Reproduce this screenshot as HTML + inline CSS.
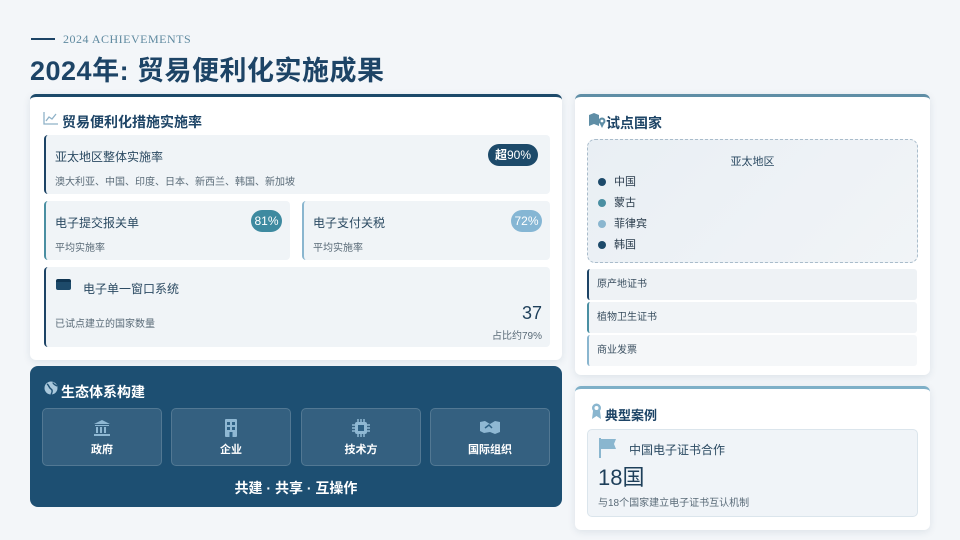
<!DOCTYPE html>
<html><head><meta charset="utf-8"><style>
*{margin:0;padding:0;box-sizing:border-box}
body{width:960px;height:540px;background:#f3f6f9;font-family:"Liberation Sans","Noto Sans CJK SC",sans-serif;position:relative;overflow:hidden;color:#1e3f5a}
.abs{position:absolute}
.card{position:absolute;background:#fff;border-radius:6px;box-shadow:0 2px 8px rgba(30,60,90,.10)}
.h{font-weight:700;font-size:14px;color:#1d4466}
.box{position:absolute;background:#f0f4f7;border-radius:4px}
.t13{font-size:12px;color:#2b4a62}
.t10{font-size:10px;color:#5a6b78}
.pill{position:absolute;border-radius:11px;color:#fff;font-size:12px;height:22px;line-height:22px;text-align:center}
.tile{position:absolute;top:42px;width:120px;height:58px;border:1px solid rgba(255,255,255,.15);background:rgba(255,255,255,.1);border-radius:5px;text-align:center;color:#fff;font-size:11px;font-weight:700}
.tile svg{display:block;margin:10px auto 4px}
.li{position:absolute;left:12px;width:330px;height:31px;border-radius:3px;font-size:10px;color:#3a4f60;line-height:31px;padding-left:8px}
.dot{display:inline-block;width:8px;height:8px;border-radius:50%;margin-right:8px;vertical-align:middle}
</style></head><body>
<div class="abs" style="left:31px;top:38px;width:24px;height:2px;background:#1d4466"></div>
<div class="abs" style="left:63px;top:32px;font-family:'Liberation Serif',serif;font-size:12px;color:#5f8aa0;letter-spacing:.5px">2024 ACHIEVEMENTS</div>
<div class="abs" style="left:30px;top:49px;font-size:27px;font-weight:700;color:#1d4466;letter-spacing:.5px">2024年: 贸易便利化实施成果</div>

<div class="card" style="left:30px;top:94px;width:532px;height:266px;border-top:3px solid #1d4a6a">
 <svg class="abs" style="left:13px;top:15px" width="15" height="13" viewBox="0 0 15 13"><path d="M1 0V12H15" stroke="#8fb2c8" fill="none" stroke-width="1.3"/><path d="M3 9L6 5L9 7L13 2" stroke="#8fb2c8" fill="none" stroke-width="1.3"/></svg>
 <div class="abs h" style="left:32px;top:15px;font-size:14px">贸易便利化措施实施率</div>
 <div class="box" style="left:14px;top:38px;width:506px;height:59px;border-left:2px solid #1d4466">
  <div class="abs t13" style="left:9px;top:13px">亚太地区整体实施率</div>
  <div class="abs t10" style="left:9px;top:38px">澳大利亚、中国、印度、日本、新西兰、韩国、新加坡</div>
  <div class="pill" style="right:12px;top:9px;width:50px;background:#1d4a6a"><b>超</b>90%</div>
 </div>
 <div class="box" style="left:14px;top:104px;width:246px;height:59px;border-left:2px solid #4a8fa2">
  <div class="abs t13" style="left:9px;top:13px">电子提交报关单</div>
  <div class="abs t10" style="left:9px;top:38px">平均实施率</div>
  <div class="pill" style="right:8px;top:9px;width:31px;background:#3e8aa0">81%</div>
 </div>
 <div class="box" style="left:272px;top:104px;width:248px;height:59px;border-left:2px solid #8ab6cf">
  <div class="abs t13" style="left:9px;top:13px">电子支付关税</div>
  <div class="abs t10" style="left:9px;top:38px">平均实施率</div>
  <div class="pill" style="right:8px;top:9px;width:31px;background:#85b6d4">72%</div>
 </div>
 <div class="box" style="left:14px;top:170px;width:506px;height:80px;border-left:2px solid #1d4466">
  <div class="abs" style="left:10px;top:12px;width:15px;height:11px;background:#1d4a6a;border-radius:2px;border-top:3px solid #0f3552"></div>
  <div class="abs t13" style="left:37px;top:13px">电子单一窗口系统</div>
  <div class="abs t10" style="left:9px;top:48px">已试点建立的国家数量</div>
  <div class="abs" style="right:8px;top:36px;font-size:18px;color:#1e3f5a">37</div>
  <div class="abs t10" style="right:8px;top:60px">占比约79%</div>
 </div>
</div>

<div class="abs" style="left:30px;top:366px;width:532px;height:141px;background:#1d4f72;border-radius:8px">
 <svg class="abs" style="left:14px;top:15px" width="14" height="14" viewBox="0 0 14 14"><circle cx="7" cy="7" r="6.5" fill="#a9c8dc"/><path d="M3 3C5 4 5 7 7 8C9 9 8 12 7 13.5M9 1.5C9 3 11 4 13 5" stroke="#1d4f72" fill="none" stroke-width="1.4"/></svg>
 <div class="abs" style="left:31px;top:16px;font-size:14px;font-weight:700;color:#fff">生态体系构建</div>
 <div class="tile" style="left:12px"><svg width="18" height="18" viewBox="0 0 18 18"><path d="M9 1L1 5H17Z M2 6H16V7H2Z M3 8H5V14H3Z M7 8H9V14H7Z M11 8H13V14H11Z M1 15H17V17H1Z" fill="#8fb8d3"/></svg>政府</div>
 <div class="tile" style="left:141px"><svg width="18" height="18" viewBox="0 0 18 18"><rect x="3" y="0" width="12" height="18" rx="1" fill="#8fb8d3"/><rect x="5" y="3" width="3" height="3" fill="#2e6185"/><rect x="10" y="3" width="3" height="3" fill="#2e6185"/><rect x="5" y="8" width="3" height="3" fill="#2e6185"/><rect x="10" y="8" width="3" height="3" fill="#2e6185"/><rect x="7.5" y="13" width="3" height="5" fill="#2e6185"/></svg>企业</div>
 <div class="tile" style="left:271px"><svg width="18" height="18" viewBox="0 0 18 18"><path d="M6 0V3M9 0V3M12 0V3M6 15V18M9 15V18M12 15V18M0 6H3M0 9H3M0 12H3M15 6H18M15 9H18M15 12H18" stroke="#8fb8d3" stroke-width="1.5"/><rect x="3" y="3" width="12" height="12" rx="2" fill="#8fb8d3"/><rect x="6" y="6" width="6" height="6" fill="#2e6185"/></svg>技术方</div>
 <div class="tile" style="left:400px"><svg width="20" height="18" viewBox="0 0 20 18"><path d="M0 3L5 2L10 5L15 2L20 3V13L15 15L10 13L4 14L0 12Z" fill="#8fb8d3"/><path d="M5 9L9 6L12 9" stroke="#2e6185" stroke-width="1.5" fill="none"/></svg>国际组织</div>
 <div class="abs" style="left:0;width:532px;top:112px;text-align:center;color:#fff;font-size:14px;font-weight:700">共建 · 共享 · 互操作</div>
</div>

<div class="card" style="left:575px;top:94px;width:355px;height:281px;border-top:3px solid #5f8ea6">
 <svg class="abs" style="left:14px;top:16px" width="17" height="15" viewBox="0 0 17 15"><path d="M0 2L5 0L10 2V13L5 11L0 13Z" fill="#5f8ea6"/><circle cx="13" cy="8" r="3.5" fill="#5f8ea6"/><path d="M10 9L13 15L16 9" fill="#5f8ea6"/><circle cx="13" cy="8" r="1.4" fill="#fff"/></svg>
 <div class="abs h" style="left:31px;top:16px">试点国家</div>
 <div class="abs" style="left:12px;top:42px;width:331px;height:124px;border:1.5px dashed #a9bccb;border-radius:8px;background:linear-gradient(135deg,#e9eff4,#f1f4f7)">
  <div class="abs" style="left:0;width:100%;top:13px;text-align:center;font-size:11px;color:#2b4a62">亚太地区</div>
  <div class="abs" style="left:10px;top:32px;font-size:11px;color:#2b3d4d;line-height:21px">
   <div><span class="dot" style="background:#1d4a6a"></span>中国</div>
   <div><span class="dot" style="background:#4a8fa2"></span>蒙古</div>
   <div><span class="dot" style="background:#8ab6cf"></span>菲律宾</div>
   <div><span class="dot" style="background:#1d4a6a"></span>韩国</div>
  </div>
 </div>
 <div class="li" style="top:172px;background:#eef2f5;border-left:2px solid #1d4466">原产地证书</div>
 <div class="li" style="top:205px;background:#f1f4f7;border-left:2px solid #4a8fa2">植物卫生证书</div>
 <div class="li" style="top:238px;background:#f5f7f9;border-left:2px solid #8ab6cf">商业发票</div>
</div>

<div class="card" style="left:575px;top:386px;width:355px;height:144px;border-top:3px solid #7fb0c8">
 <svg class="abs" style="left:16px;top:14px" width="11" height="16" viewBox="0 0 11 16"><circle cx="5.5" cy="5" r="4.5" fill="#8ab6cf"/><path d="M2 8L1 16L5.5 13L10 16L9 8Z" fill="#8ab6cf"/><circle cx="5.5" cy="5" r="2" fill="#fff"/></svg>
 <div class="abs h" style="left:30px;top:16px;font-size:13px">典型案例</div>
 <div class="abs" style="left:12px;top:40px;width:331px;height:88px;background:#f0f4f8;border:1px solid #dbe5ec;border-radius:5px">
  <svg class="abs" style="left:11px;top:8px" width="18" height="20" viewBox="0 0 18 20"><rect x="0" y="0" width="2" height="20" fill="#8ab6cf"/><path d="M2 1H17L15 6L17 11H2Z" fill="#8ab6cf"/></svg>
  <div class="abs t13" style="left:41px;top:11px;color:#2b4a62">中国电子证书合作</div>
  <div class="abs" style="left:10px;top:30px;font-size:22px;color:#1e3f5a">18国</div>
  <div class="abs t10" style="left:10px;top:64px">与18个国家建立电子证书互认机制</div>
 </div>
</div>
</body></html>
